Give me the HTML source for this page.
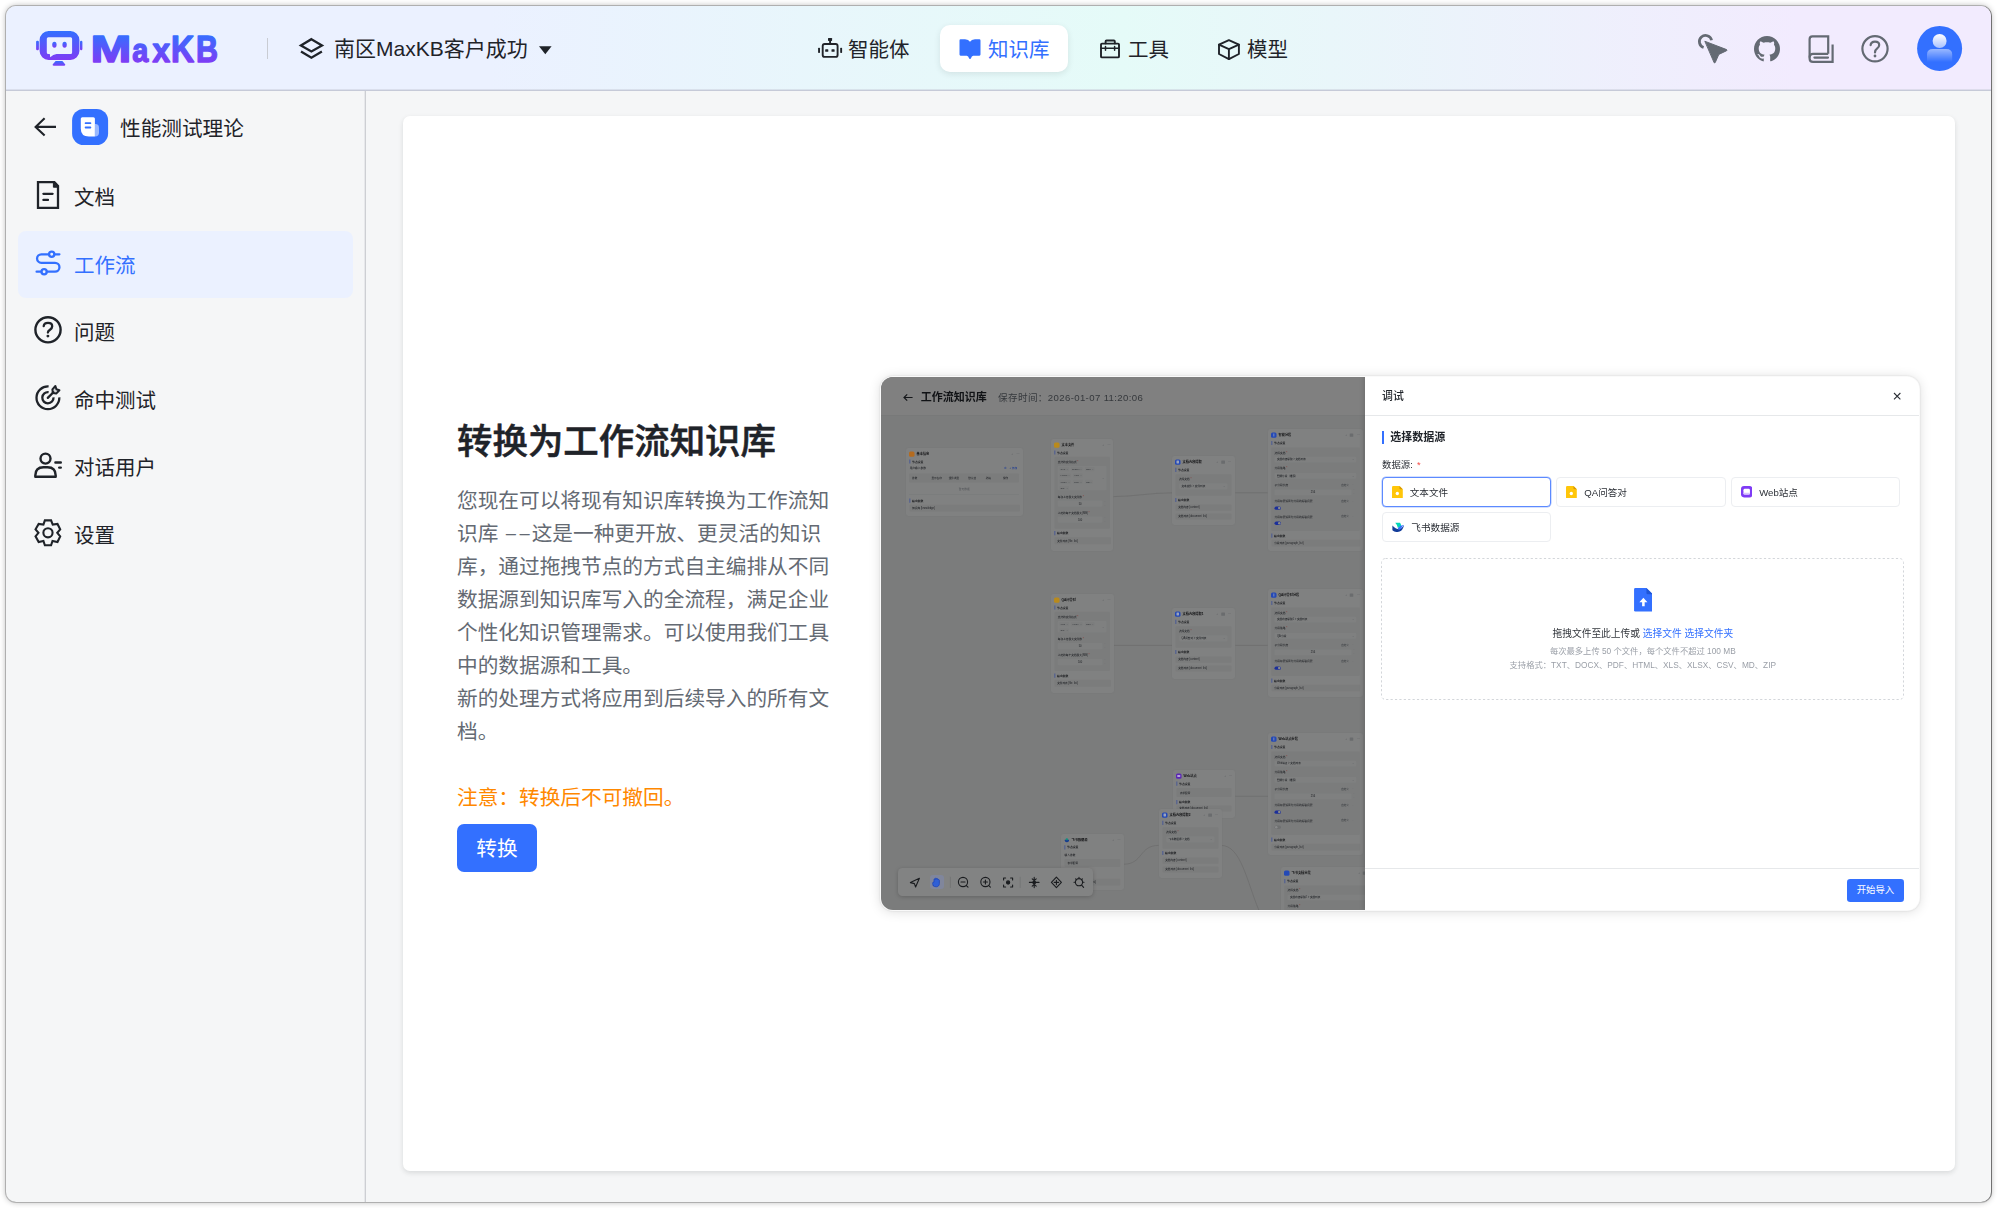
<!DOCTYPE html>
<html lang="zh-CN">
<head>
<meta charset="utf-8">
<title>MaxKB</title>
<style>
*{box-sizing:border-box;margin:0;padding:0}
html,body{width:1998px;height:1208px;background:#fff;overflow:hidden}
body{position:relative;font-family:"Liberation Sans","Noto Sans CJK SC",sans-serif;color:#1f2329;-webkit-font-smoothing:antialiased}
.abs{position:absolute}
.win{position:absolute;left:6px;top:6px;width:1985px;height:1196px;border-radius:10px;background:#f5f6f7;overflow:hidden;box-shadow:0 0 0 1px rgba(0,0,0,.2),1px 0 0 0 rgba(0,0,0,.35),0 0 6px rgba(0,0,0,.32)}
.hdr{position:absolute;left:0;top:0;width:1986px;height:85px;background:linear-gradient(90deg,#ebf1ff 24.34%,#e5fbf8 56.18%,#f2ebfe 90.18%);border-bottom:1px solid #c6cad8;box-shadow:inset 0 -1px 0 rgba(198,202,216,.45)}
.side{position:absolute;left:0;top:85px;width:360px;height:1111px;border-right:1px solid #cdcfd3;box-shadow:inset -1px 0 0 rgba(205,207,211,.35)}
.card{position:absolute;left:397px;top:110px;width:1552px;height:1055px;background:#fff;border-radius:7px;box-shadow:0 2px 5px rgba(31,35,41,.13)}
.t{position:absolute;white-space:nowrap;line-height:1}
/* header */
.logo-t{left:86px;top:21px;font-size:38px;font-weight:700;letter-spacing:-.6px;background:linear-gradient(180deg,#3370ff 0%,#7f3bf5 100%);-webkit-background-clip:text;background-clip:text;color:transparent;line-height:42px}
.vsep{position:absolute;left:261px;top:32px;width:1px;height:21px;background:#c9ccd3}
.nav{font-size:20.5px;top:33.5px;color:#1f2329}
.pill{position:absolute;left:934px;top:19px;width:128px;height:47px;border-radius:10px;background:#fff;box-shadow:0 2px 6px rgba(31,35,41,.1)}
/* sidebar */
.sb{font-size:20.5px;left:68px;color:#1f2329}
.act{position:absolute;left:12px;top:225px;width:335px;height:67px;border-radius:8px;background:#ebf1ff}
/* content */
.h1{left:451px;top:418.7px;font-size:35.45px;font-weight:500;-webkit-text-stroke:.55px #1f2329;color:#1f2329}
.p{position:absolute;left:451px;top:478px;width:384px;font-size:20.68px;line-height:33px;color:#646a73;word-break:break-all}
.warn{left:451px;top:782px;font-size:20.68px;color:#ff8800}
.btn{position:absolute;left:451px;top:818px;width:80px;height:48px;border-radius:7px;background:#3370ff;color:#fff;font-size:20.68px;text-align:center;line-height:49px}
.dd{display:inline-block;transform:scale(2,.8) translateY(-1px);transform-origin:0 50%;width:27.6px}
.ico{position:absolute;left:-6px;top:-6px;width:1998px;height:1208px;pointer-events:none}

/* preview */
.pv{position:absolute;left:875px;top:371px;width:1038px;height:533px;border-radius:12px;overflow:hidden;background:#fff;box-shadow:0 0 0 1px rgba(255,255,255,.85),0 0 2px 1px rgba(0,0,0,.12),0 1px 12px 1px rgba(0,0,0,.13)}
.pvl{position:absolute;left:0;top:0;width:485px;height:533px;background:#7b7c7c;overflow:hidden}
.pvh{position:absolute;left:0;top:0;width:485px;height:38.5px;background:#808080;border-bottom:1px solid #787979}
.pvr{position:absolute;left:484px;top:0;width:554px;height:533px;background:#fff;box-shadow:-2px 0 4px rgba(0,0,0,.12);filter:blur(.28px)}
.nd{position:absolute;background:#808181;border-radius:2.4px;box-shadow:0 0 1.5px rgba(0,0,0,.08);overflow:hidden;filter:blur(.3px)}
.ndi{position:absolute;left:0;top:0;width:400%;height:400%;transform:scale(.25);transform-origin:0 0}
.nd span,.nd i,.nd b{position:absolute;font-style:normal;white-space:nowrap;line-height:1.04;display:block}
.nd em{font-style:normal;color:#8c2a28}
.bl{filter:blur(.4px)}
.tb{position:absolute;left:17.4px;top:490.6px;width:195px;height:28.5px;border-radius:4.5px;background:#828383;box-shadow:0 1px 4px rgba(0,0,0,.2);filter:blur(.35px)}
.tba{position:absolute;left:31.6px;top:7.4px;width:13.6px;height:13.6px;border-radius:3px;background:#80869c}
.dc{position:absolute;width:169.8px;height:29.2px;border-radius:4px;background:#fff;display:flex;align-items:center;padding-left:9.2px;font-size:9.6px;color:#2b2f36}
.dc svg{flex:none;margin-right:7.1px}
.dz{position:absolute;left:16.4px;top:181.4px;width:522.8px;height:141.8px;border:1px dashed #d4d7db;border-radius:4px}
.dzt{left:16.4px;width:522.8px;text-align:center}
.pb{position:absolute;left:481.9px;top:502.1px;width:57.2px;height:22.6px;border-radius:3.2px;background:#3370ff;color:#fff;font-size:9.4px;text-align:center;line-height:22.4px}
</style>
</head>
<body>
<div class="win">
  <div class="hdr">
    <div class="vsep"></div>
    <div class="t nav" style="left:328px;top:31.8px;font-size:21px">南区MaxKB客户成功</div>
    <div class="pill"></div>
    <div class="t nav" style="left:842px">智能体</div>
    <div class="t nav" style="left:982px;color:#3370ff">知识库</div>
    <div class="t nav" style="left:1122px">工具</div>
    <div class="t nav" style="left:1241px">模型</div>
  </div>
  <div class="side"></div>
  <div class="act"></div>
  <div class="t sb" style="left:114px;top:112.5px;font-size:20.65px">性能测试理论</div>
  <div class="t sb" style="top:181.5px">文档</div>
  <div class="t sb" style="top:249.5px;color:#3370ff">工作流</div>
  <div class="t sb" style="top:316.5px">问题</div>
  <div class="t sb" style="top:384.5px">命中测试</div>
  <div class="t sb" style="top:451.5px">对话用户</div>
  <div class="t sb" style="top:519.5px">设置</div>


  <svg class="ico" viewBox="0 0 1998 1208" fill="none" stroke-linecap="round" stroke-linejoin="round">
    <defs>
      <linearGradient id="lg" x1="0" y1="0" x2="0" y2="1"><stop offset="0" stop-color="#3370ff"/><stop offset="1" stop-color="#7f3bf5"/></linearGradient>
      <linearGradient id="lgt" gradientUnits="userSpaceOnUse" x1="0" y1="34" x2="0" y2="63"><stop offset="0" stop-color="#3370ff"/><stop offset="1" stop-color="#7f3bf5"/></linearGradient>
      <linearGradient id="hd" x1="0" y1="0" x2="0" y2="1"><stop offset="0" stop-color="#fff"/><stop offset="1" stop-color="#a9c2ff"/></linearGradient>
      <linearGradient id="bd" x1="0" y1="0" x2="0" y2="1"><stop offset="0" stop-color="#fff" stop-opacity=".5"/><stop offset="1" stop-color="#fff" stop-opacity="0"/></linearGradient>
    </defs>
    <!-- logo robot -->
    <g fill="url(#lg)" stroke="none">
      <path fill-rule="evenodd" d="M48.6 31H70.4a9 9 0 0 1 9 9V51a9 9 0 0 1 -9 9H48.6a9 9 0 0 1 -9 -9V40a9 9 0 0 1 9 -9ZM48.3 37.2a1.5 1.5 0 0 0 -1.5 1.5V52.5a1.5 1.5 0 0 0 1.5 1.5H49.8L50.2 57.2Q53.2 54.3 56.5 54H70.6a1.5 1.5 0 0 0 1.5 -1.5V38.7a1.5 1.5 0 0 0 -1.5 -1.5Z"/>
      <ellipse cx="54.4" cy="44.8" rx="2.2" ry="3"/><ellipse cx="64.6" cy="44.8" rx="2.2" ry="3"/>
      <rect x="36.1" y="40.8" width="2.8" height="9.5" rx="1.2"/><rect x="80" y="40.8" width="2.4" height="9.5" rx="1.2"/>
      <path d="M55.6 61H62.4L65.3 64.6Q65.3 65.8 64 65.8H54Q52.4 65.8 52.6 64.6Z"/>
    </g>
    <text y="61.7" font-family="Liberation Sans, sans-serif" font-weight="700" font-size="36.4" fill="url(#lgt)" stroke="url(#lgt)" stroke-width="1.4" stroke-linejoin="round"><tspan x="90.42" font-size="36.4" textLength="40.86" lengthAdjust="spacingAndGlyphs">M</tspan><tspan x="132.15" font-size="33.2" textLength="16.06" lengthAdjust="spacingAndGlyphs">a</tspan><tspan x="152.38" font-size="33.2" textLength="17.55" lengthAdjust="spacingAndGlyphs">x</tspan><tspan x="171.06" font-size="36.4" textLength="23.14" lengthAdjust="spacingAndGlyphs">K</tspan><tspan x="196.06" font-size="36.4" textLength="22.03" lengthAdjust="spacingAndGlyphs">B</tspan></text>
    <!-- workspace layers + caret -->
    <g stroke="#1f2329" stroke-width="2.3" stroke-linejoin="miter">
      <path d="M311.4 39.2L322 45.4L311.4 51.5L300.9 45.4Z"/>
      <path d="M301 51.6L311.4 57.7L321.9 51.6" stroke-linecap="butt"/>
    </g>
    <path d="M539 46.2H551.6L545.3 54.2Z" fill="#1f2329"/>
    <!-- nav: robot -->
    <g stroke="#1f2329" stroke-width="1.9">
      <rect x="822.7" y="44" width="14.9" height="12.9" rx="2"/>
      <path d="M830.1 43.5V40"/>
    </g>
    <g fill="#1f2329">
      <rect x="828" y="37.9" width="4.1" height="3" rx=".6"/>
      <rect x="818.1" y="47.8" width="1.9" height="5.1" rx=".7"/><rect x="840.2" y="47.8" width="1.9" height="5.1" rx=".7"/>
      <rect x="825.2" y="49.2" width="3.1" height="2.6" rx=".6"/><rect x="831.5" y="49.2" width="3.1" height="2.6" rx=".6"/>
    </g>
    <!-- nav: book (active) -->
    <path fill="#3370ff" d="M959.5 40.4Q959.5 39.3 960.6 39.3H965Q968.6 39.3 970 41.8Q971.4 39.3 975 39.3H979.4Q980.5 39.3 980.5 40.4V54.6Q980.5 55.7 979.4 55.7H973.2Q971.6 55.7 971 58.2Q970.8 59 970 59Q969.2 59 969 58.2Q968.4 55.7 966.8 55.7H960.6Q959.5 55.7 959.5 54.6Z"/>
    <!-- nav: toolbox -->
    <g stroke="#1f2329" stroke-width="1.9">
      <rect x="1101" y="43.6" width="18" height="13.8" rx="1"/>
      <path d="M1105.6 43.4V41.4Q1105.6 40.5 1106.5 40.5H1113.9Q1114.8 40.5 1114.8 41.4V43.4"/>
      <path d="M1101 48.2H1119" stroke-width="1.4"/>
      <path d="M1105.5 46.4V50.2M1114.6 46.4V50.2" stroke-width="1.5"/>
    </g>
    <!-- nav: cube -->
    <g stroke="#1f2329" stroke-width="1.9">
      <path d="M1228.9 40.1L1238.9 44.7V54L1228.9 59.1L1219 54V44.7Z"/>
      <path d="M1219 44.7L1228.9 49.2L1238.9 44.7M1228.9 49.2V59.1"/>
    </g>
    <!-- right: cursor -->
    <g>
      <path d="M1711.6 40.2A6.2 6.2 0 1 0 1703.6 47.5" stroke="#646a73" stroke-width="2.7" stroke-linecap="butt"/>
      <path d="M1705.2 41.4L1726.6 49.6Q1727.6 50.1 1726.6 50.7L1718.8 54.4L1715.2 62.6Q1714.6 63.6 1714.1 62.6Z" fill="#646a73" stroke="#646a73" stroke-width="1"/>
    </g>
    <!-- right: github -->
    <g transform="translate(1754 35.7) scale(1.0833)"><path fill="#646a73" d="M12 .297c-6.63 0-12 5.373-12 12 0 5.303 3.438 9.8 8.205 11.385.6.113.82-.258.82-.577 0-.285-.01-1.04-.015-2.04-3.338.724-4.042-1.61-4.042-1.61C4.422 18.07 3.633 17.7 3.633 17.7c-1.087-.744.084-.729.084-.729 1.205.084 1.838 1.236 1.838 1.236 1.07 1.835 2.809 1.305 3.495.998.108-.776.417-1.305.76-1.605-2.665-.3-5.466-1.332-5.466-5.93 0-1.31.465-2.38 1.235-3.22-.135-.303-.54-1.523.105-3.176 0 0 1.005-.322 3.3 1.23.96-.267 1.98-.399 3-.405 1.02.006 2.04.138 3 .405 2.28-1.552 3.285-1.23 3.285-1.23.645 1.653.24 2.873.12 3.176.765.84 1.23 1.91 1.23 3.22 0 4.61-2.805 5.625-5.475 5.92.42.36.81 1.096.81 2.22 0 1.606-.015 2.896-.015 3.286 0 .315.21.69.825.57C20.565 22.092 24 17.592 24 12.297c0-6.627-5.373-12-12-12"/></g>
    <!-- right: doc book -->
    <g stroke="#646a73" stroke-width="2.2" stroke-linejoin="miter">
      <path d="M1828.2 53.8V36.4H1812.4Q1809.6 36.4 1809.6 39.2V58.4Q1809.6 61.8 1813 61.8H1832.6V44.4" stroke-linecap="butt"/>
      <path d="M1828.2 53.8H1813Q1809.6 53.8 1809.6 57.6" stroke-linecap="butt"/>
      <path d="M1814.4 57.6H1828"/>
    </g>
    <!-- right: help -->
    <circle cx="1875" cy="48.8" r="12.6" stroke="#646a73" stroke-width="2.2"/>
    <path d="M1870.6 45.2Q1871 41.6 1875 41.6Q1879.2 41.6 1879.2 45Q1879.2 47 1877 48.6Q1875 50 1875 52.4" stroke="#646a73" stroke-width="2.2"/>
    <circle cx="1875" cy="56" r="1.4" fill="#646a73"/>
    <!-- avatar -->
    <circle cx="1939.6" cy="48.4" r="22.5" fill="#3370ff"/>
    <circle cx="1939.6" cy="41" r="7" fill="url(#hd)"/>
    <path d="M1927 62V54.5Q1927 49 1933 49H1946.2Q1952.2 49 1952.2 54.5V62Z" fill="url(#bd)"/>
    <!-- sidebar: back arrow -->
    <path d="M56 126.9H36M44.6 118.3L35.6 126.9L44.6 135.6" stroke="#1f2329" stroke-width="2.1" stroke-linejoin="miter" stroke-linecap="butt"/>
    <!-- kb badge -->
    <rect x="72.1" y="108.9" width="36" height="36.2" rx="11.5" fill="#3370ff"/>
    <path d="M82.3 117.3H93.4Q94.9 117.3 94.9 118.8V136.6H88.8Q80.8 136.6 80.8 128.6V118.8Q80.8 117.3 82.3 117.3Z" fill="#fff"/>
    <path d="M94.9 124.1H95.4Q99 124.1 99 127.7V132.6Q99 136.6 95 136.6H94.9Z" fill="#fff" fill-opacity=".5"/>
    <path d="M85.6 123.2H90.4M85.6 127.5H90.4" stroke="#3370ff" stroke-width="1.8"/>
    <!-- sb: doc -->
    <g stroke="#1f2329" stroke-width="2.3" stroke-linejoin="miter">
      <path d="M38 182.2H54.4L58 186V207.8H38Z"/>
      <path d="M53.4 182.6V187.2H57.8Z" fill="#1f2329" stroke-width="1"/>
      <path d="M43.4 193.8H52.6M43.4 199.9H48"/>
    </g>
    <!-- sb: workflow -->
    <g stroke="#3370ff" stroke-width="2.3">
      <path d="M59.4 254.3H54.6M48.8 254.3H41.3A4.25 4.25 0 0 0 41.3 262.8H55A4.45 4.45 0 0 1 55 271.7H47M41.2 271.7H36.6"/>
      <circle cx="51.7" cy="254.3" r="2.6"/><circle cx="44.1" cy="271.7" r="2.6"/>
    </g>
    <!-- sb: question -->
    <circle cx="48" cy="329.8" r="12.6" stroke="#1f2329" stroke-width="2.4"/>
    <path d="M43.7 326.2Q44 322.9 48 322.9Q52.2 322.9 52.2 326.2Q52.2 328.2 50 329.8Q47.9 331.3 47.9 332.6" stroke="#1f2329" stroke-width="2.3"/>
    <circle cx="47.9" cy="336.1" r="1.45" fill="#1f2329"/>
    <!-- sb: hit test -->
    <g stroke="#1f2329" stroke-width="2.3">
      <path d="M48.6 386.4A11.4 11.4 0 1 0 59.3 397.4" stroke-linecap="butt"/>
      <path d="M48.6 392.2A5.6 5.6 0 1 0 53.5 397.4" stroke-linecap="butt"/>
      <path d="M47.8 397.9L53.4 392.3"/>
      <path d="M52.4 389.4L55.4 386L56.4 389.2L59.4 390.3L56.2 393.6L52.8 393Z" stroke-width="2" fill="#1f2329" fill-opacity=".15"/>
    </g>
    <!-- sb: chat user -->
    <g stroke="#1f2329" stroke-width="2.4">
      <circle cx="45.5" cy="458.6" r="5"/>
      <path d="M35.3 476.8V475.5Q35.3 467.2 43.5 467.2H47.5Q55.7 467.2 55.7 475.5V476.8Z" stroke-linejoin="round"/>
      <path d="M55.4 462.5H60.8M59.2 467.6H60.8"/>
    </g>
    <!-- sb: settings -->
    <g stroke="#1f2329" stroke-width="2.1" stroke-linejoin="miter">
      <path d="M44.87 520.42H51.08L52.73 524.56L57.49 523.94L60.18 529.32L57.28 532.83L60.18 536.35L57.49 541.94L52.52 540.9L51.08 545.25H44.87L43.42 540.9L38.66 541.94L35.55 536.35L38.45 532.83L35.55 529.32L38.66 523.94L43.42 524.56Z"/>
      <circle cx="47.97" cy="532.8" r="4.6"/>
    </g>
  </svg>
  <div class="card"></div>
  <div class="t h1">转换为工作流知识库</div>
  <div class="p">您现在可以将现有知识库转换为工作流知识库 <span class="dd">--</span>这是一种更开放、更灵活的知识库，通过拖拽节点的方式自主编排从不同数据源到知识库写入的全流程，满足企业个性化知识管理需求。可以使用我们工具中的数据源和工具。<br>新的处理方式将应用到后续导入的所有文档。</div>
  <div class="t warn">注意：转换后不可撤回。</div>
  <div class="btn">转换</div>
<!--PV-->
<div class="pv">
<div class="pvl">
<div class="pvh"></div>
<div class="abs bl" style="left:0;top:0;width:485px;height:38px">
<svg class="abs" style="left:21.6px;top:15.6px;width:10.4px;height:9px" viewBox="0 0 10.4 9" fill="none" stroke="#15171a" stroke-width="1.2"><path d="M9.6 4.5H1.2M4.2 1.3L1 4.5L4.2 7.7"/></svg>
<div class="t" style="left:39.8px;top:15.2px;font-size:11px;font-weight:700;color:#101215">工作流知识库</div>
<div class="t" style="left:117px;top:16px;font-size:9.6px;letter-spacing:.37px;color:#35383c">保存时间：2026-01-07 11:20:06</div>
</div>
<svg class="abs" style="left:0;top:0;width:485px;height:533px" viewBox="0 0 485 533" fill="none" stroke="#6b6c6c" stroke-width="0.7"><path d="M232.5 119.6C252 119.6 270 115.8 291.4 115.8M354.3 115.8H386.6M232.5 268.4H291.4M354.3 268.4H386.6M354.3 419.3H387M242.8 487.2C262 487.2 258 468.4 277.7 468.4M340.1 468.4C360 468.4 366 505 377.8 533"/></svg>
<div class="nd" style="left:25.2px;top:70.8px;width:116.6px;height:68.7px"><div class="ndi"><i style="left:12.4px;top:13.6px;width:21.6px;height:21.6px;border-radius:6.0px;background:#b46b1f"></i><span style="left:42.0px;top:18.17px;font-size:12.8px;color:#0d0e10;font-weight:700;">基本信息</span><span style="left:420.8px;top:19.77px;font-size:12.8px;color:#4c4f53;font-weight:500;">⌃</span><span style="left:441.6px;top:18.56px;font-size:12px;color:#5a5d61;font-weight:500;">⋯</span><i style="left:14.0px;top:45.6px;width:2.6px;height:16.8px;background:#364c9c"></i><span style="left:24.4px;top:48.95px;font-size:11.2px;color:#131518;font-weight:700;">节点设置</span><span style="left:14.8px;top:73.15px;font-size:10.8px;color:#1c1e22;font-weight:500;">用户输入参数</span><span style="left:392.8px;top:72.95px;font-size:11.2px;color:#1d3c94;font-weight:500;">⚙</span><span style="left:413.6px;top:73.15px;font-size:10.8px;color:#1d3c94;font-weight:500;">+ 添加</span><i style="left:12.4px;top:102.0px;width:440px;height:35.6px;background:#7b7c7c;border-radius:4px"></i><span style="left:24.4px;top:114.54px;font-size:10.4px;color:#26282c;font-weight:500;">参数</span><span style="left:101.6px;top:114.54px;font-size:10.4px;color:#26282c;font-weight:500;">显示名称</span><span style="left:170.8px;top:114.54px;font-size:10.4px;color:#26282c;font-weight:500;">组件类型</span><span style="left:248.8px;top:114.54px;font-size:10.4px;color:#26282c;font-weight:500;">默认值</span><span style="left:318.8px;top:114.54px;font-size:10.4px;color:#26282c;font-weight:500;">必填</span><span style="left:388px;top:114.54px;font-size:10.4px;color:#26282c;font-weight:500;">操作</span><span style="left:211.2px;top:159.95px;font-size:10.8px;color:#54575b;font-weight:500;">暂无数据</span><i style="left:12.4px;top:186.4px;width:440px;height:2.0px;background:#777878;border-radius:0px"></i><i style="left:14.0px;top:202.4px;width:2.6px;height:16.8px;background:#364c9c"></i><span style="left:24.4px;top:205.75px;font-size:11.2px;color:#131518;font-weight:700;">输出参数</span><i style="left:14.0px;top:226.6px;width:441.6px;height:27.6px;background:#7b7c7c;border-radius:4px"></i><span style="left:24.8px;top:235.34px;font-size:10.4px;color:#1c1e22;font-weight:500;">知识库 {knowledge}</span></div></div>
<div class="nd" style="left:169.6px;top:62.4px;width:62.8px;height:111.3px"><div class="ndi"><i style="left:12.4px;top:13.6px;width:21.6px;height:21.6px;border-radius:6.0px;background:#b98a1c"></i><span style="left:42.0px;top:18.17px;font-size:12.8px;color:#0d0e10;font-weight:700;">文本文件</span><span style="left:205.6px;top:19.77px;font-size:12.8px;color:#4c4f53;font-weight:500;">⌃</span><span style="left:226.4px;top:18.56px;font-size:12px;color:#5a5d61;font-weight:500;">⋯</span><i style="left:14.0px;top:45.6px;width:2.6px;height:16.8px;background:#364c9c"></i><span style="left:24.4px;top:48.95px;font-size:11.2px;color:#131518;font-weight:700;">节点设置</span><i style="left:14.4px;top:71.2px;width:222.0px;height:287.6px;background:#7b7c7c;border-radius:4.8px"></i><span style="left:26.8px;top:85.55px;font-size:10.8px;color:#1f2125;font-weight:500;">支持的文件格式 <em>*</em></span><i style="left:26.8px;top:108px;width:195.6px;height:96.8px;background:#7f8080;border-radius:4px"></i><i style="left:34.0px;top:112.4px;width:37.8px;height:16.4px;background:#7c7d7d;border-radius:2.4px"></i><span style="left:38.0px;top:115.54px;font-size:10.0px;color:#2a2d31;font-weight:500;">TXT</span><span style="left:62.2px;top:115.73px;font-size:9.6px;color:#55585c;font-weight:500;">×</span><i style="left:81.4px;top:112.4px;width:44.8px;height:16.4px;background:#7c7d7d;border-radius:2.4px"></i><span style="left:85.4px;top:115.54px;font-size:10.0px;color:#2a2d31;font-weight:500;">DOCX</span><span style="left:116.6px;top:115.73px;font-size:9.6px;color:#55585c;font-weight:500;">×</span><i style="left:135.8px;top:112.4px;width:37.8px;height:16.4px;background:#7c7d7d;border-radius:2.4px"></i><span style="left:139.8px;top:115.54px;font-size:10.0px;color:#2a2d31;font-weight:500;">PDF</span><span style="left:164.0px;top:115.73px;font-size:9.6px;color:#55585c;font-weight:500;">×</span><i style="left:34.0px;top:137.6px;width:44.8px;height:16.4px;background:#7c7d7d;border-radius:2.4px"></i><span style="left:38.0px;top:140.73px;font-size:10.0px;color:#2a2d31;font-weight:500;">HTML</span><span style="left:69.2px;top:140.93px;font-size:9.6px;color:#55585c;font-weight:500;">×</span><i style="left:88.4px;top:137.6px;width:37.8px;height:16.4px;background:#7c7d7d;border-radius:2.4px"></i><span style="left:92.4px;top:140.73px;font-size:10.0px;color:#2a2d31;font-weight:500;">XLS</span><span style="left:116.6px;top:140.93px;font-size:9.6px;color:#55585c;font-weight:500;">×</span><i style="left:34.0px;top:162.8px;width:44.8px;height:16.4px;background:#7c7d7d;border-radius:2.4px"></i><span style="left:38.0px;top:165.94px;font-size:10.0px;color:#2a2d31;font-weight:500;">XLSX</span><span style="left:69.2px;top:166.13px;font-size:9.6px;color:#55585c;font-weight:500;">×</span><i style="left:88.4px;top:162.8px;width:37.8px;height:16.4px;background:#7c7d7d;border-radius:2.4px"></i><span style="left:92.4px;top:165.94px;font-size:10.0px;color:#2a2d31;font-weight:500;">CSV</span><span style="left:116.6px;top:166.13px;font-size:9.6px;color:#55585c;font-weight:500;">×</span><i style="left:135.8px;top:162.8px;width:30.8px;height:16.4px;background:#7c7d7d;border-radius:2.4px"></i><span style="left:139.8px;top:165.94px;font-size:10.0px;color:#2a2d31;font-weight:500;">MD</span><span style="left:157.0px;top:166.13px;font-size:9.6px;color:#55585c;font-weight:500;">×</span><i style="left:34.0px;top:188.0px;width:37.8px;height:16.4px;background:#7c7d7d;border-radius:2.4px"></i><span style="left:38.0px;top:191.13px;font-size:10.0px;color:#2a2d31;font-weight:500;">ZIP</span><span style="left:62.2px;top:191.33px;font-size:9.6px;color:#55585c;font-weight:500;">×</span><span style="left:202.4px;top:150.95px;font-size:11.2px;color:#5a5d61;font-weight:500;">⌄</span><span style="left:26.8px;top:225.15px;font-size:10.8px;color:#1f2125;font-weight:500;">每次上传最大文件数 <em>*</em></span><i style="left:26.8px;top:246.2px;width:179.6px;height:25.2px;background:#7f8080;border-radius:4px"></i><span style="left:110.6px;top:253.74px;font-size:10.4px;color:#1c1e22;font-weight:500;">50</span><span style="left:210.4px;top:248.51px;font-size:8px;color:#6a6d70;font-weight:500;">⌃</span><span style="left:210.4px;top:259.71px;font-size:8px;color:#6a6d70;font-weight:500;">⌄</span><span style="left:26.8px;top:289.95px;font-size:10.8px;color:#1f2125;font-weight:500;">上传的每个文档最大(MB) <em>*</em></span><i style="left:26.8px;top:310.2px;width:179.6px;height:25.2px;background:#7f8080;border-radius:4px"></i><span style="left:107.6px;top:317.74px;font-size:10.4px;color:#1c1e22;font-weight:500;">100</span><span style="left:210.4px;top:312.51px;font-size:8px;color:#6a6d70;font-weight:500;">⌃</span><span style="left:210.4px;top:323.71px;font-size:8px;color:#6a6d70;font-weight:500;">⌄</span><i style="left:14.0px;top:368.4px;width:2.6px;height:16.8px;background:#364c9c"></i><span style="left:24.4px;top:371.75px;font-size:11.2px;color:#131518;font-weight:700;">输出参数</span><i style="left:14.0px;top:393.2px;width:226.4px;height:28px;background:#7b7c7c;border-radius:4px"></i><span style="left:24.8px;top:402.14px;font-size:10.4px;color:#1c1e22;font-weight:500;">文件列表 {file_list}</span></div></div>
<div class="nd" style="left:170px;top:217.2px;width:62.8px;height:98.8px"><div class="ndi"><i style="left:12.4px;top:13.6px;width:21.6px;height:21.6px;border-radius:6.0px;background:#b98a1c"></i><span style="left:42.0px;top:18.17px;font-size:12.8px;color:#0d0e10;font-weight:700;">QA问答对</span><span style="left:205.6px;top:19.77px;font-size:12.8px;color:#4c4f53;font-weight:500;">⌃</span><span style="left:226.4px;top:18.56px;font-size:12px;color:#5a5d61;font-weight:500;">⋯</span><i style="left:14.0px;top:45.6px;width:2.6px;height:16.8px;background:#364c9c"></i><span style="left:24.4px;top:48.95px;font-size:11.2px;color:#131518;font-weight:700;">节点设置</span><i style="left:14.4px;top:71.2px;width:222.0px;height:237.2px;background:#7b7c7c;border-radius:4.8px"></i><span style="left:26.8px;top:85.55px;font-size:10.8px;color:#1f2125;font-weight:500;">支持的文件格式 <em>*</em></span><i style="left:26.8px;top:108px;width:195.6px;height:46.4px;background:#7f8080;border-radius:4px"></i><i style="left:34.0px;top:112.4px;width:37.8px;height:16.4px;background:#7c7d7d;border-radius:2.4px"></i><span style="left:38.0px;top:115.54px;font-size:10.0px;color:#2a2d31;font-weight:500;">XLS</span><span style="left:62.2px;top:115.73px;font-size:9.6px;color:#55585c;font-weight:500;">×</span><i style="left:81.4px;top:112.4px;width:44.8px;height:16.4px;background:#7c7d7d;border-radius:2.4px"></i><span style="left:85.4px;top:115.54px;font-size:10.0px;color:#2a2d31;font-weight:500;">XLSX</span><span style="left:116.6px;top:115.73px;font-size:9.6px;color:#55585c;font-weight:500;">×</span><i style="left:135.8px;top:112.4px;width:37.8px;height:16.4px;background:#7c7d7d;border-radius:2.4px"></i><span style="left:139.8px;top:115.54px;font-size:10.0px;color:#2a2d31;font-weight:500;">CSV</span><span style="left:164.0px;top:115.73px;font-size:9.6px;color:#55585c;font-weight:500;">×</span><i style="left:34.0px;top:137.6px;width:37.8px;height:16.4px;background:#7c7d7d;border-radius:2.4px"></i><span style="left:38.0px;top:140.73px;font-size:10.0px;color:#2a2d31;font-weight:500;">ZIP</span><span style="left:62.2px;top:140.93px;font-size:9.6px;color:#55585c;font-weight:500;">×</span><span style="left:202.4px;top:125.75px;font-size:11.2px;color:#5a5d61;font-weight:500;">⌄</span><span style="left:26.8px;top:174.75px;font-size:10.8px;color:#1f2125;font-weight:500;">每次上传最大文件数 <em>*</em></span><i style="left:26.8px;top:195.8px;width:179.6px;height:25.2px;background:#7f8080;border-radius:4px"></i><span style="left:110.6px;top:203.34px;font-size:10.4px;color:#1c1e22;font-weight:500;">50</span><span style="left:210.4px;top:198.11px;font-size:8px;color:#6a6d70;font-weight:500;">⌃</span><span style="left:210.4px;top:209.31px;font-size:8px;color:#6a6d70;font-weight:500;">⌄</span><span style="left:26.8px;top:239.55px;font-size:10.8px;color:#1f2125;font-weight:500;">上传的每个文档最大(MB) <em>*</em></span><i style="left:26.8px;top:259.8px;width:179.6px;height:25.2px;background:#7f8080;border-radius:4px"></i><span style="left:107.6px;top:267.34px;font-size:10.4px;color:#1c1e22;font-weight:500;">100</span><span style="left:210.4px;top:262.11px;font-size:8px;color:#6a6d70;font-weight:500;">⌃</span><span style="left:210.4px;top:273.31px;font-size:8px;color:#6a6d70;font-weight:500;">⌄</span><i style="left:14.0px;top:318.0px;width:2.6px;height:16.8px;background:#364c9c"></i><span style="left:24.4px;top:321.35px;font-size:11.2px;color:#131518;font-weight:700;">输出参数</span><i style="left:14.0px;top:342.8px;width:226.4px;height:28px;background:#7b7c7c;border-radius:4px"></i><span style="left:24.8px;top:351.74px;font-size:10.4px;color:#1c1e22;font-weight:500;">文件列表 {file_list}</span></div></div>
<div class="nd" style="left:291.4px;top:78.7px;width:62.9px;height:69.6px"><div class="ndi"><i style="left:12.4px;top:13.6px;width:21.6px;height:21.6px;border-radius:6.0px;background:#2449b6"><b style="left:6.0px;top:4.8px;width:9.6px;height:12px;background:#9aa3bd;border-radius:1.6px"></b></i><span style="left:42.0px;top:18.17px;font-size:12.8px;color:#0d0e10;font-weight:700;">文档内容提取</span><span style="left:177.2px;top:19.77px;font-size:12.8px;color:#4c4f53;font-weight:500;">⌃</span><i style="left:197.2px;top:18.0px;width:14.4px;height:12.8px;background:#6a6c6e;border-radius:2.4px"></i><span style="left:225.2px;top:18.56px;font-size:12px;color:#5a5d61;font-weight:500;">⋯</span><i style="left:14.0px;top:46.8px;width:2.6px;height:16.8px;background:#364c9c"></i><span style="left:24.4px;top:50.15px;font-size:11.2px;color:#131518;font-weight:700;">节点设置</span><i style="left:14.0px;top:72.8px;width:224.4px;height:86.4px;background:#7b7c7c;border-radius:4.8px"></i><span style="left:27.6px;top:87.55px;font-size:10.8px;color:#1f2125;font-weight:500;">选择文档 <em>*</em></span><i style="left:28.8px;top:109.0px;width:192.8px;height:25.2px;background:#7f8080;border-radius:4px"></i><span style="left:38.0px;top:116.54px;font-size:10.4px;color:#1c1e22;font-weight:500;">文本文件 &gt; 文件列表</span><span style="left:205.6px;top:114.55px;font-size:11.2px;color:#5a5d61;font-weight:500;">⌄</span><i style="left:14.0px;top:167.6px;width:2.6px;height:16.8px;background:#364c9c"></i><span style="left:24.4px;top:170.95px;font-size:11.2px;color:#131518;font-weight:700;">输出参数</span><i style="left:14.0px;top:194.0px;width:224.4px;height:24.8px;background:#7b7c7c;border-radius:4px"></i><span style="left:24.8px;top:201.34px;font-size:10.4px;color:#1c1e22;font-weight:500;">文档内容 {content}</span><i style="left:14.0px;top:230.2px;width:224.4px;height:23.6px;background:#7b7c7c;border-radius:4px"></i><span style="left:24.8px;top:236.94px;font-size:10.4px;color:#1c1e22;font-weight:500;">文档列表 {document_list}</span></div></div>
<div class="nd" style="left:291.4px;top:231.4px;width:62.9px;height:70.2px"><div class="ndi"><i style="left:12.4px;top:13.6px;width:21.6px;height:21.6px;border-radius:6.0px;background:#2449b6"><b style="left:6.0px;top:4.8px;width:9.6px;height:12px;background:#9aa3bd;border-radius:1.6px"></b></i><span style="left:42.0px;top:18.17px;font-size:12.8px;color:#0d0e10;font-weight:700;">文档内容提取1</span><span style="left:177.2px;top:19.77px;font-size:12.8px;color:#4c4f53;font-weight:500;">⌃</span><i style="left:197.2px;top:18.0px;width:14.4px;height:12.8px;background:#6a6c6e;border-radius:2.4px"></i><span style="left:225.2px;top:18.56px;font-size:12px;color:#5a5d61;font-weight:500;">⋯</span><i style="left:14.0px;top:46.8px;width:2.6px;height:16.8px;background:#364c9c"></i><span style="left:24.4px;top:50.15px;font-size:11.2px;color:#131518;font-weight:700;">节点设置</span><i style="left:14.0px;top:72.8px;width:224.4px;height:86.4px;background:#7b7c7c;border-radius:4.8px"></i><span style="left:27.6px;top:87.55px;font-size:10.8px;color:#1f2125;font-weight:500;">选择文档 <em>*</em></span><i style="left:28.8px;top:109.0px;width:192.8px;height:25.2px;background:#7f8080;border-radius:4px"></i><span style="left:38.0px;top:116.54px;font-size:10.4px;color:#1c1e22;font-weight:500;">QA问答对 &gt; 文件列表</span><span style="left:205.6px;top:114.55px;font-size:11.2px;color:#5a5d61;font-weight:500;">⌄</span><i style="left:14.0px;top:167.6px;width:2.6px;height:16.8px;background:#364c9c"></i><span style="left:24.4px;top:170.95px;font-size:11.2px;color:#131518;font-weight:700;">输出参数</span><i style="left:14.0px;top:194.0px;width:224.4px;height:24.8px;background:#7b7c7c;border-radius:4px"></i><span style="left:24.8px;top:201.34px;font-size:10.4px;color:#1c1e22;font-weight:500;">文档内容 {content}</span><i style="left:14.0px;top:230.2px;width:224.4px;height:23.6px;background:#7b7c7c;border-radius:4px"></i><span style="left:24.8px;top:236.94px;font-size:10.4px;color:#1c1e22;font-weight:500;">文档列表 {document_list}</span></div></div>
<div class="nd" style="left:386.5px;top:51.7px;width:95.3px;height:122.8px"><div class="ndi"><i style="left:12.4px;top:13.6px;width:21.6px;height:21.6px;border-radius:6.0px;background:#2449b6"><b style="left:9.2px;top:4.8px;width:3.2px;height:12px;background:#9aa3bd;border-radius:0"></b></i><span style="left:42.0px;top:18.17px;font-size:12.8px;color:#0d0e10;font-weight:700;">智能分段</span><span style="left:306.8px;top:19.77px;font-size:12.8px;color:#4c4f53;font-weight:500;">⌃</span><i style="left:326.8px;top:18.0px;width:14.4px;height:12.8px;background:#6a6c6e;border-radius:2.4px"></i><span style="left:354.8px;top:18.56px;font-size:12px;color:#5a5d61;font-weight:500;">⋯</span><i style="left:14.0px;top:47.6px;width:2.6px;height:16.8px;background:#364c9c"></i><span style="left:24.4px;top:50.95px;font-size:11.2px;color:#131518;font-weight:700;">节点设置</span><i style="left:12.8px;top:74.0px;width:354.4px;height:334.0px;background:#7b7c7c;border-radius:4.8px"></i><span style="left:26.4px;top:88.75px;font-size:10.8px;color:#1f2125;font-weight:500;">选择文档 <em>*</em></span><i style="left:26.4px;top:111.2px;width:326.8px;height:22.4px;background:#7f8080;border-radius:4px"></i><span style="left:35.6px;top:117.34px;font-size:10.4px;color:#1c1e22;font-weight:500;">文档内容提取 &gt; 文档列表</span><span style="left:337.2px;top:115.35px;font-size:11.2px;color:#5a5d61;font-weight:500;">⌄</span><span style="left:26.4px;top:152.35px;font-size:10.8px;color:#1f2125;font-weight:500;">分段策略 <em>*</em></span><i style="left:26.4px;top:176.4px;width:326.8px;height:22.4px;background:#7f8080;border-radius:4px"></i><span style="left:35.6px;top:182.54px;font-size:10.4px;color:#1c1e22;font-weight:500;">智能分段（推荐）</span><span style="left:337.2px;top:180.55px;font-size:11.2px;color:#5a5d61;font-weight:500;">⌄</span><span style="left:26.4px;top:217.95px;font-size:10.8px;color:#1f2125;font-weight:500;">子分段长度</span><span style="left:292.8px;top:218.33px;font-size:10.0px;color:#3a3d41;font-weight:500;">自定义</span><span style="left:334.4px;top:217.33px;font-size:9.6px;color:#6a6d70;font-weight:500;">⌄</span><i style="left:26.4px;top:242.4px;width:308px;height:22.4px;background:#7f8080;border-radius:4px"></i><span style="left:171.4px;top:248.54px;font-size:10.4px;color:#1c1e22;font-weight:500;">256</span><span style="left:338.4px;top:243.31px;font-size:8px;color:#6a6d70;font-weight:500;">⌃</span><span style="left:338.4px;top:254.51px;font-size:8px;color:#6a6d70;font-weight:500;">⌄</span><span style="left:26.4px;top:284.35px;font-size:10.8px;color:#1f2125;font-weight:500;">分段标题设置为分段的关联问题</span><span style="left:292.8px;top:284.74px;font-size:10.0px;color:#3a3d41;font-weight:500;">自定义</span><span style="left:334.4px;top:283.73px;font-size:9.6px;color:#6a6d70;font-weight:500;">⌄</span><i style="left:26.4px;top:309.6px;width:25.6px;height:13.6px;border-radius:8px;background:#1c2f9a"></i><i style="left:40.0px;top:311.4px;width:10.0px;height:10.0px;border-radius:8px;background:#8a8b8c"></i><span style="left:26.4px;top:344.75px;font-size:10.8px;color:#1f2125;font-weight:500;">分段标题设置为分段的关联问题</span><span style="left:292.8px;top:345.13px;font-size:10.0px;color:#3a3d41;font-weight:500;">自定义</span><span style="left:334.4px;top:344.13px;font-size:9.6px;color:#6a6d70;font-weight:500;">⌄</span><i style="left:26.4px;top:370.0px;width:25.6px;height:13.6px;border-radius:8px;background:#1c2f9a"></i><i style="left:40.0px;top:371.8px;width:10.0px;height:10.0px;border-radius:8px;background:#8a8b8c"></i><i style="left:14.0px;top:418.4px;width:2.6px;height:16.8px;background:#364c9c"></i><span style="left:24.4px;top:421.75px;font-size:11.2px;color:#131518;font-weight:700;">输出参数</span><i style="left:14.0px;top:443.2px;width:355.2px;height:26.4px;background:#7b7c7c;border-radius:4px"></i><span style="left:24.8px;top:451.34px;font-size:10.4px;color:#1c1e22;font-weight:500;">分段列表 {paragraph_list}</span></div></div>
<div class="nd" style="left:386.5px;top:212px;width:95.3px;height:108px"><div class="ndi"><i style="left:12.4px;top:13.6px;width:21.6px;height:21.6px;border-radius:6.0px;background:#2449b6"><b style="left:9.2px;top:4.8px;width:3.2px;height:12px;background:#9aa3bd;border-radius:0"></b></i><span style="left:42.0px;top:18.17px;font-size:12.8px;color:#0d0e10;font-weight:700;">QA问答对分段</span><span style="left:306.8px;top:19.77px;font-size:12.8px;color:#4c4f53;font-weight:500;">⌃</span><i style="left:326.8px;top:18.0px;width:14.4px;height:12.8px;background:#6a6c6e;border-radius:2.4px"></i><span style="left:354.8px;top:18.56px;font-size:12px;color:#5a5d61;font-weight:500;">⋯</span><i style="left:14.0px;top:47.6px;width:2.6px;height:16.8px;background:#364c9c"></i><span style="left:24.4px;top:50.95px;font-size:11.2px;color:#131518;font-weight:700;">节点设置</span><i style="left:12.8px;top:74.0px;width:354.4px;height:273.6px;background:#7b7c7c;border-radius:4.8px"></i><span style="left:26.4px;top:88.75px;font-size:10.8px;color:#1f2125;font-weight:500;">选择文档 <em>*</em></span><i style="left:26.4px;top:111.2px;width:326.8px;height:22.4px;background:#7f8080;border-radius:4px"></i><span style="left:35.6px;top:117.34px;font-size:10.4px;color:#1c1e22;font-weight:500;">文档内容提取1 &gt; 文档列表</span><span style="left:337.2px;top:115.35px;font-size:11.2px;color:#5a5d61;font-weight:500;">⌄</span><span style="left:26.4px;top:152.35px;font-size:10.8px;color:#1f2125;font-weight:500;">分段策略 <em>*</em></span><i style="left:26.4px;top:176.4px;width:326.8px;height:22.4px;background:#7f8080;border-radius:4px"></i><span style="left:35.6px;top:182.54px;font-size:10.4px;color:#1c1e22;font-weight:500;">QA 分段</span><span style="left:337.2px;top:180.55px;font-size:11.2px;color:#5a5d61;font-weight:500;">⌄</span><span style="left:26.4px;top:217.95px;font-size:10.8px;color:#1f2125;font-weight:500;">子分段长度</span><span style="left:292.8px;top:218.33px;font-size:10.0px;color:#3a3d41;font-weight:500;">自定义</span><span style="left:334.4px;top:217.33px;font-size:9.6px;color:#6a6d70;font-weight:500;">⌄</span><i style="left:26.4px;top:242.4px;width:308px;height:22.4px;background:#7f8080;border-radius:4px"></i><span style="left:171.4px;top:248.54px;font-size:10.4px;color:#1c1e22;font-weight:500;">256</span><span style="left:338.4px;top:243.31px;font-size:8px;color:#6a6d70;font-weight:500;">⌃</span><span style="left:338.4px;top:254.51px;font-size:8px;color:#6a6d70;font-weight:500;">⌄</span><span style="left:26.4px;top:284.35px;font-size:10.8px;color:#1f2125;font-weight:500;">分段标题设置为分段的关联问题</span><span style="left:292.8px;top:284.74px;font-size:10.0px;color:#3a3d41;font-weight:500;">自定义</span><span style="left:334.4px;top:283.73px;font-size:9.6px;color:#6a6d70;font-weight:500;">⌄</span><i style="left:26.4px;top:309.6px;width:25.6px;height:13.6px;border-radius:8px;background:#1c2f9a"></i><i style="left:40.0px;top:311.4px;width:10.0px;height:10.0px;border-radius:8px;background:#8a8b8c"></i><i style="left:14.0px;top:358.0px;width:2.6px;height:16.8px;background:#364c9c"></i><span style="left:24.4px;top:361.35px;font-size:11.2px;color:#131518;font-weight:700;">输出参数</span><i style="left:14.0px;top:382.8px;width:355.2px;height:26.4px;background:#7b7c7c;border-radius:4px"></i><span style="left:24.8px;top:390.94px;font-size:10.4px;color:#1c1e22;font-weight:500;">分段列表 {paragraph_list}</span></div></div>
<div class="nd" style="left:387px;top:355.6px;width:95.3px;height:122.4px"><div class="ndi"><i style="left:12.4px;top:13.6px;width:21.6px;height:21.6px;border-radius:6.0px;background:#2449b6"><b style="left:9.2px;top:4.8px;width:3.2px;height:12px;background:#9aa3bd;border-radius:0"></b></i><span style="left:42.0px;top:18.17px;font-size:12.8px;color:#0d0e10;font-weight:700;">Web站点分段</span><span style="left:306.8px;top:19.77px;font-size:12.8px;color:#4c4f53;font-weight:500;">⌃</span><i style="left:326.8px;top:18.0px;width:14.4px;height:12.8px;background:#6a6c6e;border-radius:2.4px"></i><span style="left:354.8px;top:18.56px;font-size:12px;color:#5a5d61;font-weight:500;">⋯</span><i style="left:14.0px;top:47.6px;width:2.6px;height:16.8px;background:#364c9c"></i><span style="left:24.4px;top:50.95px;font-size:11.2px;color:#131518;font-weight:700;">节点设置</span><i style="left:12.8px;top:74.0px;width:354.4px;height:334.0px;background:#7b7c7c;border-radius:4.8px"></i><span style="left:26.4px;top:88.75px;font-size:10.8px;color:#1f2125;font-weight:500;">选择文档 <em>*</em></span><i style="left:26.4px;top:111.2px;width:326.8px;height:22.4px;background:#7f8080;border-radius:4px"></i><span style="left:35.6px;top:117.34px;font-size:10.4px;color:#1c1e22;font-weight:500;">Web站点 &gt; 文档列表</span><span style="left:337.2px;top:115.35px;font-size:11.2px;color:#5a5d61;font-weight:500;">⌄</span><span style="left:26.4px;top:152.35px;font-size:10.8px;color:#1f2125;font-weight:500;">分段策略 <em>*</em></span><i style="left:26.4px;top:176.4px;width:326.8px;height:22.4px;background:#7f8080;border-radius:4px"></i><span style="left:35.6px;top:182.54px;font-size:10.4px;color:#1c1e22;font-weight:500;">智能分段（推荐）</span><span style="left:337.2px;top:180.55px;font-size:11.2px;color:#5a5d61;font-weight:500;">⌄</span><span style="left:26.4px;top:217.95px;font-size:10.8px;color:#1f2125;font-weight:500;">子分段长度</span><span style="left:292.8px;top:218.33px;font-size:10.0px;color:#3a3d41;font-weight:500;">自定义</span><span style="left:334.4px;top:217.33px;font-size:9.6px;color:#6a6d70;font-weight:500;">⌄</span><i style="left:26.4px;top:242.4px;width:308px;height:22.4px;background:#7f8080;border-radius:4px"></i><span style="left:171.4px;top:248.54px;font-size:10.4px;color:#1c1e22;font-weight:500;">256</span><span style="left:338.4px;top:243.31px;font-size:8px;color:#6a6d70;font-weight:500;">⌃</span><span style="left:338.4px;top:254.51px;font-size:8px;color:#6a6d70;font-weight:500;">⌄</span><span style="left:26.4px;top:284.35px;font-size:10.8px;color:#1f2125;font-weight:500;">分段标题设置为分段的关联问题</span><span style="left:292.8px;top:284.74px;font-size:10.0px;color:#3a3d41;font-weight:500;">自定义</span><span style="left:334.4px;top:283.73px;font-size:9.6px;color:#6a6d70;font-weight:500;">⌄</span><i style="left:26.4px;top:309.6px;width:25.6px;height:13.6px;border-radius:8px;background:#1c2f9a"></i><i style="left:40.0px;top:311.4px;width:10.0px;height:10.0px;border-radius:8px;background:#8a8b8c"></i><span style="left:26.4px;top:344.75px;font-size:10.8px;color:#1f2125;font-weight:500;">分段标题设置为分段的关联问题</span><span style="left:292.8px;top:345.13px;font-size:10.0px;color:#3a3d41;font-weight:500;">自定义</span><span style="left:334.4px;top:344.13px;font-size:9.6px;color:#6a6d70;font-weight:500;">⌄</span><i style="left:26.4px;top:370.0px;width:25.6px;height:13.6px;border-radius:8px;background:#6f7071"></i><i style="left:28.4px;top:371.8px;width:10.0px;height:10.0px;border-radius:8px;background:#8a8b8c"></i><i style="left:14.0px;top:418.4px;width:2.6px;height:16.8px;background:#364c9c"></i><span style="left:24.4px;top:421.75px;font-size:11.2px;color:#131518;font-weight:700;">输出参数</span><i style="left:14.0px;top:443.2px;width:355.2px;height:26.4px;background:#7b7c7c;border-radius:4px"></i><span style="left:24.8px;top:451.34px;font-size:10.4px;color:#1c1e22;font-weight:500;">分段列表 {paragraph_list}</span></div></div>
<div class="nd" style="left:292.3px;top:393px;width:62px;height:48.1px"><div class="ndi"><i style="left:12.4px;top:13.6px;width:21.6px;height:21.6px;border-radius:6.0px;background:#5b27b5"><b style="left:4.8px;top:6.0px;width:12px;height:8.8px;background:#b7a3d6;border-radius:2.4px"></b></i><span style="left:42.0px;top:18.17px;font-size:12.8px;color:#0d0e10;font-weight:700;">Web站点</span><span style="left:202.4px;top:19.77px;font-size:12.8px;color:#4c4f53;font-weight:500;">⌃</span><span style="left:223.2px;top:18.56px;font-size:12px;color:#5a5d61;font-weight:500;">⋯</span><i style="left:14.0px;top:46.0px;width:2.6px;height:16.8px;background:#364c9c"></i><span style="left:24.4px;top:49.35px;font-size:11.2px;color:#131518;font-weight:700;">节点设置</span><i style="left:14.0px;top:71.6px;width:220px;height:36.8px;background:#7b7c7c;border-radius:4px"></i><span style="left:27.6px;top:85.74px;font-size:10.4px;color:#1c1e22;font-weight:500;">表单配置</span><i style="left:14.0px;top:120.0px;width:2.6px;height:16.8px;background:#364c9c"></i><span style="left:24.4px;top:123.35px;font-size:11.2px;color:#131518;font-weight:700;">输出参数</span><i style="left:14.0px;top:142.0px;width:220px;height:24px;background:#7b7c7c;border-radius:4px"></i><span style="left:24.8px;top:148.94px;font-size:10.4px;color:#1c1e22;font-weight:500;">文档列表 {document_list}</span></div></div>
<div class="nd" style="left:180px;top:456.7px;width:62.8px;height:56.5px"><div class="ndi"><i style="left:12.4px;top:13.6px;width:21.6px;height:21.6px;border-radius:6.0px;background:transparent"><b style="left:2.4px;top:9.6px;width:16.8px;height:9.6px;background:#173a8f;border-radius:0 0 8px 8px"></b><b style="left:6.4px;top:3.2px;width:9.6px;height:8px;background:#0e8f80;border-radius:4px 4px 0 0"></b></i><span style="left:42.0px;top:18.17px;font-size:12.8px;color:#0d0e10;font-weight:700;">飞书数据源</span><span style="left:205.6px;top:19.77px;font-size:12.8px;color:#4c4f53;font-weight:500;">⌃</span><span style="left:226.4px;top:18.56px;font-size:12px;color:#5a5d61;font-weight:500;">⋯</span><i style="left:14.0px;top:44.8px;width:2.6px;height:16.8px;background:#364c9c"></i><span style="left:24.4px;top:48.15px;font-size:11.2px;color:#131518;font-weight:700;">节点设置</span><span style="left:14.4px;top:78.35px;font-size:10.8px;color:#1c1e22;font-weight:500;">输入参数</span><i style="left:14.0px;top:100.4px;width:223.2px;height:31.6px;background:#7b7c7c;border-radius:4px"></i><span style="left:26.4px;top:111.34px;font-size:10.4px;color:#1c1e22;font-weight:500;">表单配置</span><i style="left:14.0px;top:143.2px;width:2.6px;height:16.8px;background:#364c9c"></i><span style="left:24.4px;top:146.55px;font-size:11.2px;color:#131518;font-weight:700;">输出参数</span><i style="left:14.0px;top:179.2px;width:223.2px;height:26.8px;background:#7b7c7c;border-radius:4px"></i><span style="left:24.8px;top:187.34px;font-size:10.4px;color:#1c1e22;font-weight:500;">文档列表 {document_list}</span></div></div>
<div class="nd" style="left:277.7px;top:431.9px;width:62.9px;height:68.7px"><div class="ndi"><i style="left:12.4px;top:13.6px;width:21.6px;height:21.6px;border-radius:6.0px;background:#2449b6"><b style="left:6.0px;top:4.8px;width:9.6px;height:12px;background:#9aa3bd;border-radius:1.6px"></b></i><span style="left:42.0px;top:18.17px;font-size:12.8px;color:#0d0e10;font-weight:700;">文档内容提取2</span><span style="left:177.2px;top:19.77px;font-size:12.8px;color:#4c4f53;font-weight:500;">⌃</span><i style="left:197.2px;top:18.0px;width:14.4px;height:12.8px;background:#6a6c6e;border-radius:2.4px"></i><span style="left:225.2px;top:18.56px;font-size:12px;color:#5a5d61;font-weight:500;">⋯</span><i style="left:14.0px;top:46.8px;width:2.6px;height:16.8px;background:#364c9c"></i><span style="left:24.4px;top:50.15px;font-size:11.2px;color:#131518;font-weight:700;">节点设置</span><i style="left:14.0px;top:72.8px;width:224.4px;height:86.4px;background:#7b7c7c;border-radius:4.8px"></i><span style="left:27.6px;top:87.55px;font-size:10.8px;color:#1f2125;font-weight:500;">选择文档 <em>*</em></span><i style="left:28.8px;top:109.0px;width:192.8px;height:25.2px;background:#7f8080;border-radius:4px"></i><span style="left:38.0px;top:116.54px;font-size:10.4px;color:#1c1e22;font-weight:500;">飞书数据源 &gt; 文档</span><span style="left:205.6px;top:114.55px;font-size:11.2px;color:#5a5d61;font-weight:500;">⌄</span><i style="left:14.0px;top:167.6px;width:2.6px;height:16.8px;background:#364c9c"></i><span style="left:24.4px;top:170.95px;font-size:11.2px;color:#131518;font-weight:700;">输出参数</span><i style="left:14.0px;top:194.0px;width:224.4px;height:24.8px;background:#7b7c7c;border-radius:4px"></i><span style="left:24.8px;top:201.34px;font-size:10.4px;color:#1c1e22;font-weight:500;">文档内容 {content}</span><i style="left:14.0px;top:230.2px;width:224.4px;height:23.6px;background:#7b7c7c;border-radius:4px"></i><span style="left:24.8px;top:236.94px;font-size:10.4px;color:#1c1e22;font-weight:500;">文档列表 {document_list}</span></div></div>
<div class="nd" style="left:400.4px;top:489.7px;width:95.3px;height:50px"><div class="ndi"><i style="left:12.4px;top:13.6px;width:21.6px;height:21.6px;border-radius:6.0px;background:#2449b6"></i><span style="left:42.0px;top:18.17px;font-size:12.8px;color:#0d0e10;font-weight:700;">飞书文档分段</span><span style="left:306.8px;top:19.77px;font-size:12.8px;color:#4c4f53;font-weight:500;">⌃</span><i style="left:326.8px;top:18.0px;width:14.4px;height:12.8px;background:#6a6c6e;border-radius:2.4px"></i><span style="left:354.8px;top:18.56px;font-size:12px;color:#5a5d61;font-weight:500;">⋯</span><i style="left:14.0px;top:48.4px;width:2.6px;height:16.8px;background:#364c9c"></i><span style="left:24.4px;top:51.75px;font-size:11.2px;color:#131518;font-weight:700;">节点设置</span><i style="left:12.8px;top:74.0px;width:354.4px;height:160px;background:#7b7c7c;border-radius:4px"></i><span style="left:26.4px;top:87.55px;font-size:10.8px;color:#1f2125;font-weight:500;">选择文档 <em>*</em></span><i style="left:26.4px;top:110.8px;width:326.8px;height:22.4px;background:#7f8080;border-radius:4px"></i><span style="left:35.6px;top:116.94px;font-size:10.4px;color:#1c1e22;font-weight:500;">文档内容提取2 &gt; 文档列表</span><span style="left:337.2px;top:114.95px;font-size:11.2px;color:#5a5d61;font-weight:500;">⌄</span><span style="left:26.4px;top:151.15px;font-size:10.8px;color:#1f2125;font-weight:500;">分段策略 <em>*</em></span></div></div>
<div class="tb"><i class="tba"></i><svg style="position:absolute;left:0;top:0;width:195px;height:28.5px" viewBox="0 0 195 28.5" fill="none" stroke="#1a1c1f" stroke-width="1.1" stroke-linejoin="round" stroke-linecap="round"><path d="M12.4 14.6L21.4 10.2L17.6 19L16.4 15.6Z"/><path d="M35.4 17.8C34 15.6 34.6 13.6 36 14.2V11.6C36 10.6 37.2 10.6 37.2 11.6V10.8C37.2 9.8 38.6 9.8 38.6 10.8V11.2C38.6 10.4 40 10.4 40 11.4V12C40 11.2 41.4 11.4 41.4 12.4V15.4C41.4 17.6 40 18.8 38.2 18.8C36.8 18.8 36 18.4 35.4 17.8Z" stroke="#1f45b8" fill="#2f5fd6" stroke-width=".8"/><path d="M52.4 9.2V19.6M122.2 9.2V19.6" stroke="#707171" stroke-width=".7"/><circle cx="65" cy="14" r="4.6"/><path d="M63 14H67M68.4 17.6L70 19.2"/><circle cx="87.4" cy="14" r="4.6"/><path d="M85.4 14H89.4M87.4 12V16M90.8 17.6L92.4 19.2"/><path d="M105.6 12V10H107.6M112.6 10H114.6V12M114.6 17V19H112.6M107.6 19H105.6V17"/><circle cx="110.1" cy="14.5" r="1.6" fill="#1a1c1f"/><path d="M131.4 14.4H141M136.2 9.4V12.2M136.2 16.6V19.6M134.2 10.8L136.2 12.6L138.2 10.8M134.2 18.2L136.2 16.4L138.2 18.2"/><circle cx="136.2" cy="14.4" r="1.3" fill="#1a1c1f"/><path d="M158.4 9.2L163.4 14.4L158.4 19.6L153.4 14.4ZM158.4 12.2V16.6M156.2 14.4H160.6" /><path d="M177.4 14.2A3.6 3.6 0 1 0 184.6 14.2A3.6 3.6 0 1 0 177.4 14.2M181 9.2V10.6M186 14.2H184.6M176 14.2H177.4M177.6 10.8L178.6 11.8M184.4 10.8L183.4 11.8M183.6 17.2L185.6 19.4"/></svg></div>
</div>
<div class="pvr">
<div class="t" style="left:17px;top:14.2px;font-size:10.9px;font-weight:500;color:#1f2329">调试</div>
<svg class="abs" style="left:527.6px;top:15.2px;width:8.4px;height:8.4px" viewBox="0 0 10 10" stroke="#2b2f36" stroke-width="1.3" fill="none"><path d="M1.2 1.2L8.8 8.8M8.8 1.2L1.2 8.8"/></svg>
<div class="abs" style="left:0;top:38px;width:554px;height:1px;background:#e6e8ea"></div>
<div class="abs" style="left:17px;top:54.3px;width:2px;height:13.2px;background:#3370ff"></div>
<div class="t" style="left:25.3px;top:55.4px;font-size:11px;font-weight:700;color:#1f2329">选择数据源</div>
<div class="t" style="left:17px;top:82.6px;font-size:9.4px;color:#2b2f36">数据源: <span style="color:#f54a45;margin-left:1.6px">*</span></div>
<div class="dc" style="left:16.7px;top:100.4px;border:1.4px solid #5c8aff;box-shadow:0 0 0 .5px #a9c1ff"><svg viewBox="0 0 11 13" style="width:10.8px;height:12.8px"><path d="M1.2 0H7.6L11 3.4V11.8Q11 13 9.8 13H1.2Q0 13 0 11.8V1.2Q0 0 1.2 0Z" fill="#ffc60a"/><path d="M7.6 0L11 3.4H8.6Q7.6 3.4 7.6 2.4Z" fill="#d99904"/><circle cx="5.4" cy="7.6" r="1.7" fill="#fff"/></svg><span>文本文件</span></div>
<div class="dc" style="left:191.2px;top:100.4px;border:1px solid #eceef1"><svg viewBox="0 0 11 13" style="width:10.8px;height:12.8px"><path d="M1.2 0H7.6L11 3.4V11.8Q11 13 9.8 13H1.2Q0 13 0 11.8V1.2Q0 0 1.2 0Z" fill="#ffc60a"/><path d="M7.6 0L11 3.4H8.6Q7.6 3.4 7.6 2.4Z" fill="#d99904"/><circle cx="5.4" cy="7.6" r="1.7" fill="#fff"/></svg><span>QA问答对</span></div>
<div class="dc" style="left:365.5px;top:100.4px;border:1px solid #eceef1"><svg viewBox="0 0 12 12" style="width:11.4px;height:11.4px"><rect width="12" height="12" rx="3.2" fill="#7f3bf5"/><rect x="2.6" y="3" width="6.8" height="6" rx="1.4" fill="#fff"/><rect x="2.6" y="7" width="6.8" height="2" rx=".8" fill="#d9c4ff"/></svg><span>Web站点</span></div>
<div class="dc" style="left:16.7px;top:135.4px;border:1px solid #eceef1"><svg viewBox="0 0 13 11" style="width:12.4px;height:10.6px"><path d="M3.4 .6H8.4Q9.8 2.4 9.6 4.6Q7.6 4.6 6.2 6.2Q5.8 3 3.4 .6Z" fill="#00d6b9"/><path d="M.4 3.6Q3.6 7.4 7.6 7.6Q10 7.4 12.6 3.2Q11.6 8.4 8 10Q3.6 11.4 .4 8.6Z" fill="#133c9a"/><path d="M6 6.4Q8.4 3.4 12.6 3.2Q10.6 4.6 9.6 6.8Q8.4 8.2 6.6 7.6Z" fill="#3370ff"/></svg><span>飞书数据源</span></div>
<svg class="abs" style="left:16.4px;top:181.4px;width:523px;height:142px" viewBox="0 0 523 142" fill="none"><rect x=".5" y=".5" width="522" height="141" rx="4" stroke="#d3d6da" stroke-width="1" stroke-dasharray="2.2 2.2"/></svg>
<svg class="abs" style="left:268.5px;top:211.2px;width:18.8px;height:23.6px" viewBox="0 0 19 24"><path d="M1.4 0H12.6L19 6.4V22.6Q19 24 17.6 24H1.4Q0 24 0 22.6V1.4Q0 0 1.4 0Z" fill="#3370ff"/><path d="M12.6 0L19 6.4H14Q12.6 6.4 12.6 5Z" fill="#1f55d6"/><path d="M9.5 10L13.6 14.4H10.8V18.6H8.2V14.4H5.4Z" fill="#fff"/></svg>
<div class="t dzt" style="top:251.6px;font-size:9.74px;color:#33373d">拖拽文件至此上传或 <span style="color:#3370ff">选择文件</span> <span style="color:#3370ff">选择文件夹</span></div>
<div class="t dzt" style="top:269.9px;font-size:8.3px;color:#9a9fa7">每次最多上传 50 个文件，每个文件不超过 100 MB</div>
<div class="t dzt" style="top:283.5px;font-size:8.3px;color:#9a9fa7">支持格式：TXT、DOCX、PDF、HTML、XLS、XLSX、CSV、MD、ZIP</div>
<div class="abs" style="left:0;top:491px;width:554px;height:1px;background:#e6e8ea"></div>
<div class="pb">开始导入</div>
</div>
</div>
<!--/PV-->
</div>
</body>
</html>
